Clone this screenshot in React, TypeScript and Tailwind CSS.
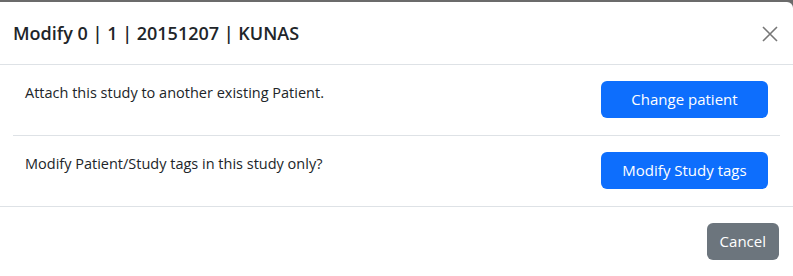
const font = { fontFamily: '"Open Sans", "Noto Sans", sans-serif' };

function ActionRow({ text, label, last }: { text: string; label: string; last?: boolean }) {
  return (
    <div className={`mx-[13px] flex items-start justify-between px-3 pb-[17px] pt-4 ${last ? "" : "border-b border-[#dee2e6]"}`}>
      <p className="text-[14.5px] leading-6 text-[#212529]">{text}</p>
      <button className="h-[37px] w-[167px] rounded-md bg-[#0d6efd] text-[15px] text-white">{label}</button>
    </div>
  );
}

export default function App() {
  return (
    <div className="h-[276px] w-[793px] overflow-hidden bg-[#6b6b6b] pt-[2px]" style={font}>
      <div className="h-full rounded-tr-md bg-white">
        {/* header */}
        <div className="flex h-[63px] items-center justify-between border-b border-[#dee2e6] pl-[13px] pr-[15px]">
          <h5 className="text-[18px] font-semibold leading-[30px] text-[#212529]">Modify 0 | 1 | 20151207 | KUNAS</h5>
          <button className="mt-[2px] text-[#777]">
            <svg width="16" height="16" viewBox="0 0 16 16" fill="none" stroke="currentColor" strokeWidth="1.6">
              <path d="M1 1L15 15M15 1L1 15" />
            </svg>
          </button>
        </div>

        {/* body */}
        <ActionRow text="Attach this study to another existing Patient." label="Change patient" />
        <ActionRow text="Modify Patient/Study tags in this study only?" label="Modify Study tags" last />

        {/* footer */}
        <div className="flex justify-end border-t border-[#dee2e6] pr-[14px] pt-4">
          <button className="h-[37px] rounded-md bg-[#6c757d] px-[13px] text-[15px] text-white">Cancel</button>
        </div>
      </div>
    </div>
  );
}
